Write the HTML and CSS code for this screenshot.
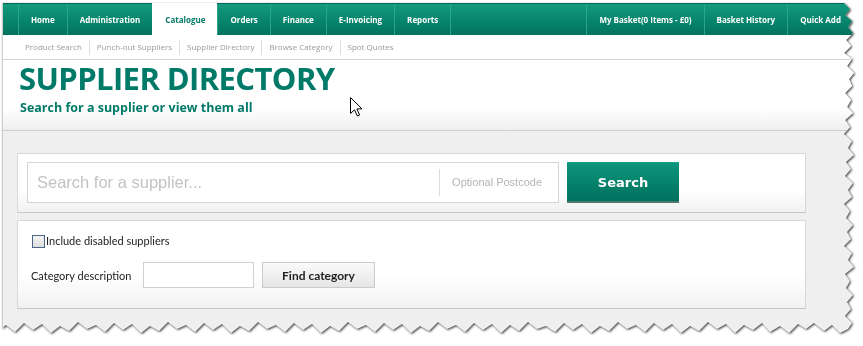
FILE: index.html
```html
<!DOCTYPE html>
<html lang="en">
<head>
  <meta charset="UTF-8">
  <meta name="viewport" content="width=device-width, initial-scale=1.0">
  <title>Supplier Directory</title>
  <link rel="stylesheet" href="styles.css">
</head>
<body>
  <div class="frame">
    <div class="page">
      <nav class="topnav">
        <span class="navItem navStub"></span>
        <a class="navItem">Home</a>
        <a class="navItem">Administration</a>
        <a class="navItem active">Catalogue</a>
        <a class="navItem">Orders</a>
        <a class="navItem">Finance</a>
        <a class="navItem">E-Invoicing</a>
        <a class="navItem">Reports</a>
        <span class="navItem navFill"></span>
        <a class="navItem">My Basket(0 Items - £0)</a>
        <a class="navItem">Basket History</a>
        <a class="navItem">Quick Add</a>
      </nav>
      <div class="subnav">
        <a>Product Search</a>
        <a>Punch-out Suppliers</a>
        <a>Supplier Directory</a>
        <a>Browse Category</a>
        <a>Spot Quotes</a>
      </div>
      <div class="header">
        <h1>SUPPLIER DIRECTORY</h1>
        <p class="subtitle">Search for a supplier or view them all</p>
      </div>
      <div class="content">
        <div class="panel searchPanel">
          <div class="searchBox">
            <span class="searchText">Search for a supplier...</span>
            <span class="postcode">Optional Postcode</span>
          </div>
          <button class="searchBtn">Search</button>
        </div>
        <div class="panel optionsPanel">
          <label class="checkRow"><span class="checkBox"></span>Include disabled suppliers</label>
          <div class="catRow">
            <span class="catLabel">Category description</span>
            <span class="catInput"></span>
            <button class="findBtn">Find category</button>
          </div>
        </div>
      </div>
    </div>
    <svg class="cursor" width="13" height="20" viewBox="0 0 13 20">
      <path d="M0.5 0.5 L0.5 16.5 L4.5 12.8 L7.3 19 L9.6 18 L6.9 11.9 L12 11.9 Z" fill="#fff" stroke="#000" stroke-width="1" stroke-linejoin="miter"/>
    </svg>
  </div>
</body>
</html>
```

FILE: styles.css
```css
body { margin: 0; background: #fff; font-family: 'Open Sans', 'Noto Sans', sans-serif; }
.frame { position: relative; padding: 3px 0 0 2px; width: 858px; filter: drop-shadow(1px 1px 1px rgba(0,0,0,0.75)); }
.page {
  width: 855px; height: 333px; background: #efefef; box-sizing: border-box; border-left: 1px solid #cfcfcf; overflow: hidden;
  clip-path: polygon(0 0, 842px 0, 848px 6px, 843px 12px, 850px 18px, 846px 24px, 851px 30px, 844px 37px, 849px 43px, 842px 50px, 850px 56px, 845px 63px, 852px 70px, 847px 76px, 850px 83px, 843px 90px, 849px 97px, 845px 104px, 851px 110px, 843px 117px, 848px 124px, 842px 131px, 850px 138px, 846px 145px, 852px 152px, 844px 159px, 849px 166px, 843px 173px, 851px 180px, 846px 187px, 850px 194px, 842px 201px, 848px 208px, 844px 215px, 851px 222px, 845px 229px, 849px 236px, 842px 243px, 850px 250px, 846px 257px, 852px 264px, 843px 271px, 848px 278px, 844px 285px, 851px 292px, 845px 299px, 849px 306px, 843px 313px, 850px 320px, 846px 326px,
    838px 330px, 830px 322px, 822px 328px, 812px 320px, 804px 326px, 796px 321px, 787px 330px, 778px 323px, 768px 329px, 760px 320px, 751px 327px, 742px 322px, 733px 330px, 724px 321px, 715px 326px, 706px 319px, 697px 328px, 688px 323px, 679px 330px, 670px 321px, 661px 327px, 652px 320px, 643px 329px, 634px 322px, 625px 326px, 616px 319px, 607px 328px, 598px 323px, 589px 330px, 580px 321px, 571px 327px, 562px 320px, 553px 329px, 544px 323px, 535px 326px, 526px 319px, 517px 328px, 508px 322px, 499px 330px, 490px 321px, 481px 327px, 472px 320px, 463px 329px, 454px 322px, 445px 326px, 436px 319px, 427px 328px, 418px 323px, 409px 330px, 400px 321px, 391px 327px, 382px 320px, 373px 329px, 364px 322px, 355px 326px, 346px 319px, 337px 328px, 328px 323px, 319px 330px, 310px 321px, 301px 327px, 292px 320px, 283px 329px, 274px 322px, 265px 326px, 256px 319px, 247px 328px, 238px 323px, 229px 330px, 220px 321px, 211px 327px, 202px 320px, 193px 329px, 184px 322px, 175px 326px, 166px 319px, 157px 328px, 148px 323px, 139px 330px, 130px 321px, 121px 327px, 112px 320px, 103px 329px, 94px 322px, 85px 326px, 76px 319px, 67px 328px, 58px 323px, 49px 330px, 40px 321px, 31px 327px, 22px 320px, 13px 329px, 4px 322px, 0 325px);
}

/* top menu */
.topnav { display: flex; height: 32px; box-sizing: border-box; border-top: 1px solid #006a58; background: linear-gradient(#119a7e, #00735f); padding-right: 4px; }
.navItem { display: flex; align-items: center; padding: 0 12px; border-left: 1px solid #2aa589; color: #fff; font-size: 8px; font-weight: 700; white-space: nowrap; }
.navStub { padding: 0; width: 15px; border-left: none; }
.navFill { flex: 1; padding: 0; }
.navItem.active { background: #fff; color: #007a66; padding: 0 12px; border-left-color: #fff; margin-top: -1px; }

/* sub menu */
.subnav { display: flex; align-items: center; height: 24px; padding-left: 15px; background: #fff; border-bottom: 1px solid #d2d2d2; }
.subnav a { padding: 0 7px 1px; font-size: 8px; color: #9a9a9a; border-left: 1px solid #dedede; line-height: 14px; }
.subnav a:first-child { border-left: none; }

/* page heading */
.header { height: 71px; box-sizing: border-box; padding: 3px 0 0 16px; background: linear-gradient(#fff 68%, #efefef); border-bottom: 1px solid #cdcdcd; }
h1 { margin: 0; font-size: 31px; line-height: 31px; font-weight: 700; color: #007a68; letter-spacing: -0.6px; }
.subtitle { margin: 6px 0 0 1px; font-size: 12.5px; line-height: 15px; font-weight: 700; color: #007a68; }

/* panels */
.content { padding: 22px 0 0 14px; }
.panel { width: 789px; box-sizing: border-box; border: 1px solid #d8d8d8; border-bottom-color: #c6c6c6; background: linear-gradient(#fff 62%, #f1f1f1); }
.searchPanel { display: flex; height: 60px; padding: 8px 9px; gap: 8px; }
.searchBox { display: flex; align-items: center; width: 532px; height: 41px; box-sizing: border-box; border: 1px solid #d4d4d4; background: #fff; }
.searchText { flex: 1; padding-left: 9px; font-family: 'Liberation Sans', Arial, sans-serif; font-size: 16.5px; color: #c3c3c3; }
.postcode { border-left: 1px solid #dddddd; line-height: 27px; padding: 0 16px 0 12px; font-family: 'Liberation Sans', Arial, sans-serif; font-size: 11px; color: #b4b4b4; }
.searchBtn { width: 112px; height: 41px; border: none; border-top: 1px solid #15a486; border-bottom: 2px solid #4f7a70; background: linear-gradient(#0c967b, #00705e); color: #fff; font-family: 'DejaVu Sans', Verdana, sans-serif; font-size: 13px; font-weight: 700; padding: 0; }

.optionsPanel { margin-top: 7px; height: 89px; padding: 12px 13px 0; font-family: Lato, 'Open Sans', sans-serif; }
.checkRow { display: flex; align-items: center; font-size: 11px; color: #222; line-height: 16px; }
.checkBox { width: 11px; height: 11px; margin-left: 1px; margin-right: 1px; border: 1px solid #4a6785; background: linear-gradient(#f4f4f4, #dcdcdc); }
.catRow { display: flex; align-items: center; margin-top: 13px; }
.catLabel { flex: none; width: 112px; font-size: 11px; color: #222; white-space: nowrap; }
.catInput { flex: none; width: 111px; height: 26px; box-sizing: border-box; border: 1px solid #d0d0d0; background: #fff; }
.findBtn { flex: none; margin-left: 8px; width: 113px; height: 26px; border: 1px solid #cbcbcb; background: linear-gradient(#fafafa, #e6e6e6); font-family: Lato, 'Open Sans', sans-serif; font-size: 12px; font-weight: 700; color: #222; padding: 0; }

.cursor { position: absolute; left: 350px; top: 97px; }
```
